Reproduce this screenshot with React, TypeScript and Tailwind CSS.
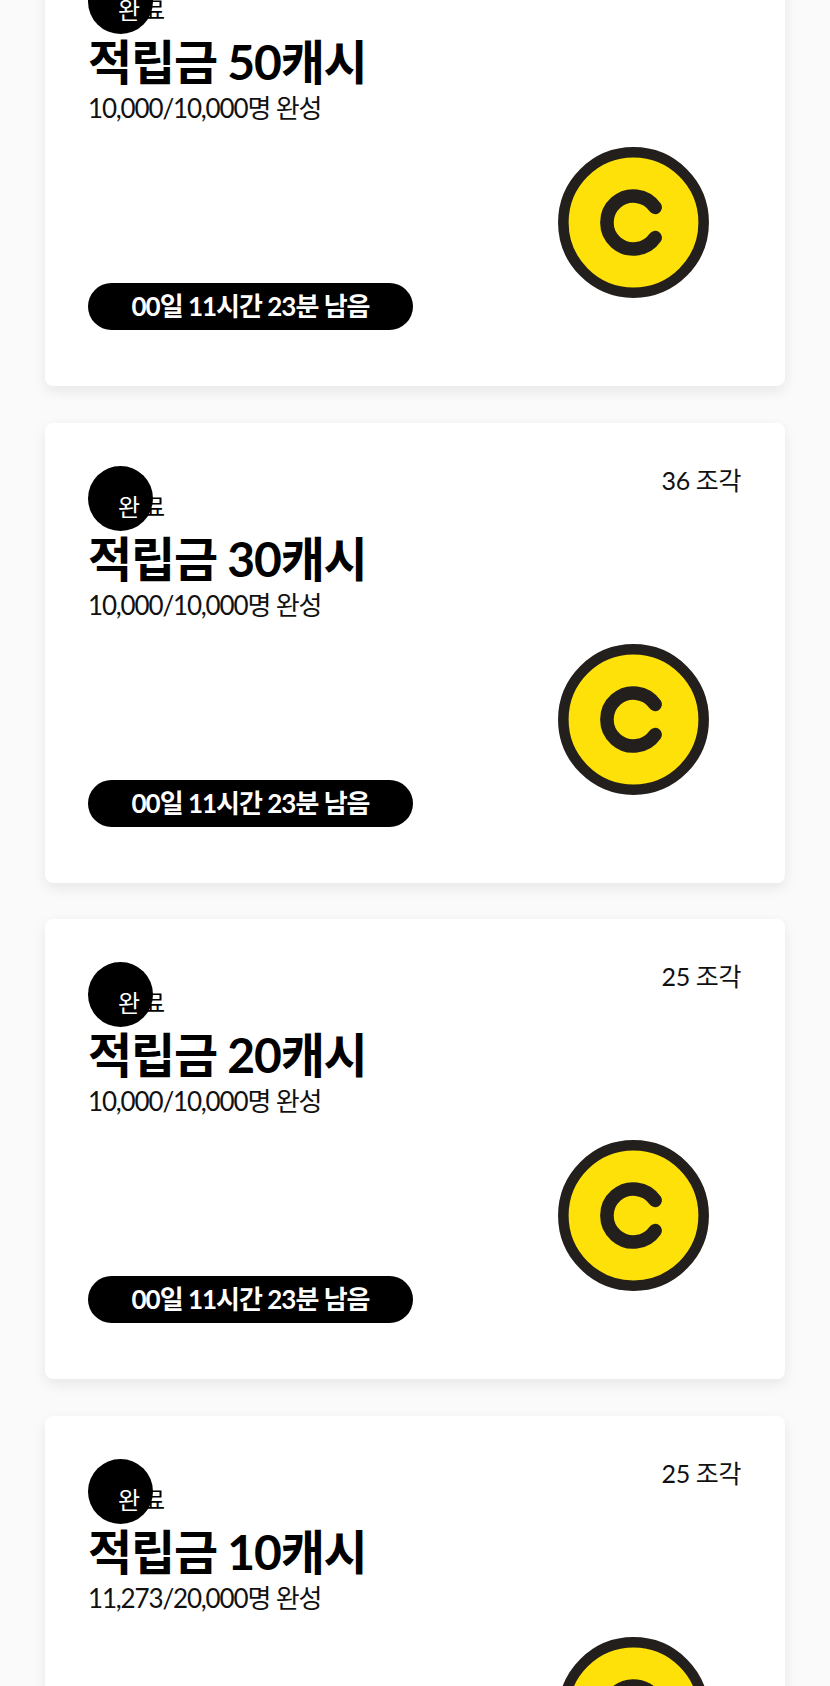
const missions = [
  { cash: 50, done: '10,000/10,000', pieces: 36 },
  { cash: 30, done: '10,000/10,000', pieces: 36 },
  { cash: 20, done: '10,000/10,000', pieces: 25 },
  { cash: 10, done: '11,273/20,000', pieces: 25 },
];

function Coin() {
  return (
    <svg width="151" height="151" viewBox="0 0 150 150" className="block">
      <circle cx="75" cy="75" r="69.7" fill="#ffe10a" stroke="#231f1c" strokeWidth="10.5" />
      <path d="M96.5 60A26.3 26.3 0 1 0 96.5 90" fill="none" stroke="#231f1c" strokeWidth="13.5" strokeLinecap="round" />
    </svg>
  );
}

function MissionCard({ cash, done, pieces }: { cash: number; done: string; pieces: number }) {
  return (
    <div className="flex h-[460px] justify-between rounded-lg bg-white pt-[43px] pr-[44px] pb-[56px] pl-[43px] shadow-[0_5px_14px_rgba(0,0,0,0.08)]">
      <div className="flex flex-col items-start">
        <div className="relative h-[65px] w-[65px] rounded-full bg-black">
          <div className="absolute top-[25px] left-[30px] flex gap-[3px] whitespace-nowrap text-[24px] leading-[32px]">
            <span className="text-white">완</span>
            <span className="text-black">료</span>
          </div>
        </div>
        <h2 className="mt-[-2px] text-[48px] leading-[60px] font-bold tracking-[-1.2px] text-black">
          적립금 {cash}캐시
        </h2>
        <p className="mt-[-2px] text-[26px] leading-[36px] tracking-[-1.15px] text-[#111]">
          {done}명 완성
        </p>
        <div className="mt-auto flex h-[47px] w-[325px] items-center justify-center rounded-full bg-black text-[26px] font-bold tracking-[-1px] text-white">
          00일 11시간 23분 남음
        </div>
      </div>
      <div className="flex flex-col items-end">
        <span className="mt-[-2px] text-[25px] leading-[32px] tracking-[-0.4px] text-[#111]">{pieces} 조각</span>
        <div className="mt-[148px] mr-[32px]">
          <Coin />
        </div>
      </div>
    </div>
  );
}

export default function App() {
  return (
    <div className="h-[1686px] overflow-hidden bg-[#fafafa] font-['Lato','Noto_Sans_CJK_KR',sans-serif]">
      <div className="mt-[-74px] flex flex-col gap-[36.7px] pr-[45px] pl-[45px]">
        {missions.map((m) => (
          <MissionCard key={m.cash} {...m} />
        ))}
      </div>
    </div>
  );
}
